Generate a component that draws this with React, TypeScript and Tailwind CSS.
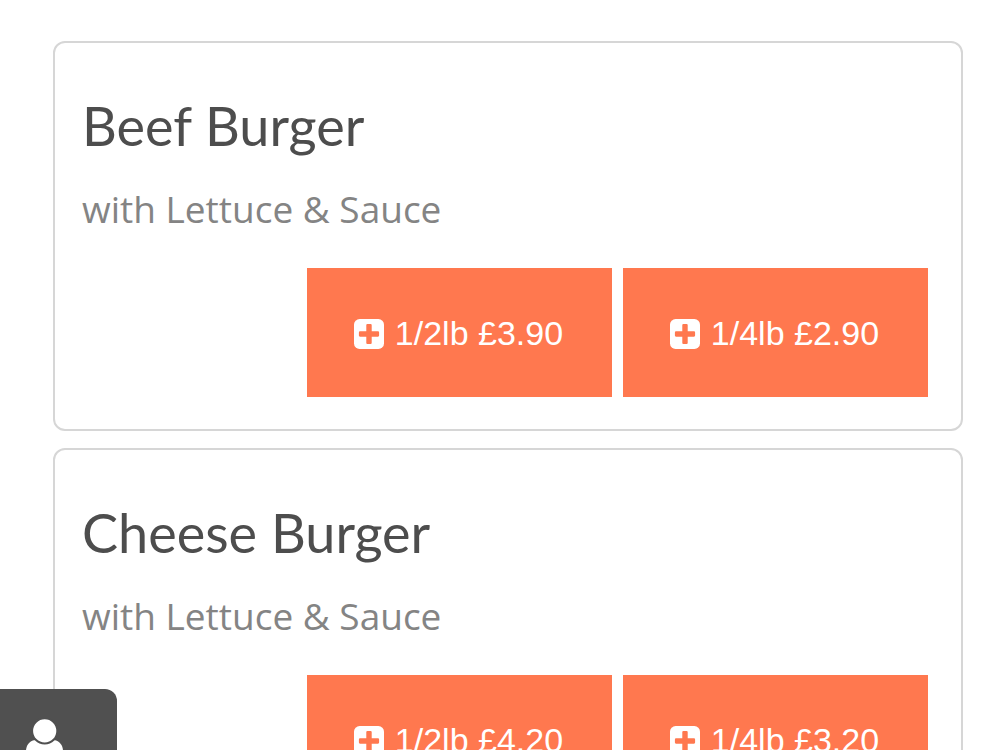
import React from "react";

interface PriceOption {
  size: string;
  price: string;
}

interface MenuItemProps {
  name: string;
  description: string;
  options: PriceOption[];
}

const menuItems: MenuItemProps[] = [
  {
    name: "Beef Burger",
    description: "with Lettuce & Sauce",
    options: [
      { size: "1/2lb", price: "£3.90" },
      { size: "1/4lb", price: "£2.90" },
    ],
  },
  {
    name: "Cheese Burger",
    description: "with Lettuce & Sauce",
    options: [
      { size: "1/2lb", price: "£4.20" },
      { size: "1/4lb", price: "£3.20" },
    ],
  },
];

const PlusIcon = () => (
  <svg viewBox="0 0 30 30" className="size-[30px] shrink-0" aria-hidden="true">
    <rect width="30" height="30" rx="5.6" fill="#fff" />
    <path
      d="M6 12.3h6.3V6a1.1 1.1 0 0 1 1.1-1.1h3.2A1.1 1.1 0 0 1 17.7 6v6.3H24a1.1 1.1 0 0 1 1.1 1.1v3.2a1.1 1.1 0 0 1-1.1 1.1h-6.3V24a1.1 1.1 0 0 1-1.1 1.1h-3.2a1.1 1.1 0 0 1-1.1-1.1v-6.3H6a1.1 1.1 0 0 1-1.1-1.1v-3.2A1.1 1.1 0 0 1 6 12.3z"
      fill="#ff784f"
    />
  </svg>
);

const MenuItem = ({ name, description, options }: MenuItemProps) => {
  return (
    <article className="rounded-xl border-2 border-[#d6d6d6] bg-white px-[27px] pt-[45px] pb-8">
      <h2 className="font-['Lato',sans-serif] text-[54px] leading-[76px] text-[#4d4d4d]">
        {name}
      </h2>
      <p className="mt-4 font-['Open_Sans',sans-serif] text-[37px] leading-[58px] text-[#848484]">
        {description}
      </p>
      <div className="mt-[30px] flex justify-end gap-[11px] pr-1.5">
        {options.map((option) => (
          <button
            key={option.size}
            type="button"
            className="flex h-[129px] w-[305px] items-center justify-center gap-[11px] bg-[#ff784f] pt-0.5 pr-0.5 font-['Liberation_Sans',sans-serif] text-[34px] text-white"
          >
            <PlusIcon />
            {option.size} {option.price}
          </button>
        ))}
      </div>
    </article>
  );
};

const App = () => {
  return (
    <div className="h-screen overflow-hidden bg-white">
      <main className="flex flex-col gap-[17px] pt-[41px] pr-[37px] pl-[53px]">
        {menuItems.map((item) => (
          <MenuItem key={item.name} {...item} />
        ))}
      </main>

      {/* Account tab pinned to the bottom corner */}
      <button
        type="button"
        aria-label="Account"
        className="fixed bottom-0 left-0 flex h-[61px] w-[117px] justify-center overflow-hidden rounded-tr-xl bg-[#505050] pt-[29px] pr-7"
      >
        <svg viewBox="0 0 40 44" className="h-11 w-10 shrink-0" aria-hidden="true">
          <path d="M1 44V33c0-6 4-11 10-11h17c6 0 10 5 10 11v11z" fill="#fff" />
          <circle cx="19.7" cy="12.9" r="12.6" fill="#fff" stroke="#505050" strokeWidth="2" />
        </svg>
      </button>
    </div>
  );
};

export default App;
